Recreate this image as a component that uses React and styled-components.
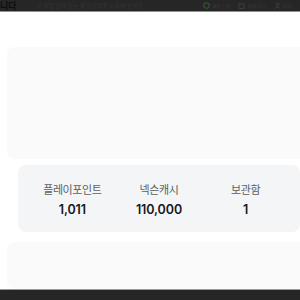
import React from "react";
import styled, { createGlobalStyle } from "styled-components";

const Global = createGlobalStyle`
  html, body { margin: 0; padding: 0; background: #ffffff; overflow: hidden; }
  body { font-family: "Noto Sans CJK KR", "Noto Sans", sans-serif; }
`;

const Page = styled.div`
  width: 300px;
  height: 300px;
  overflow: hidden;
  display: flex;
  flex-direction: column;
`;

const Header = styled.header`
  height: 11px;
  flex: none;
  background: #262626;
  border-bottom: 1px solid #8f8f8f;
  display: flex;
  align-items: center;
  overflow: hidden;
  white-space: nowrap;
`;

const Logo = styled.span`
  font-size: 9px;
  font-weight: 700;
  color: #0e0e0e;
  width: 37px;
  line-height: 11px;
`;

const Search = styled.span`
  font-size: 6px;
  color: #333333;
  flex: 1;
  line-height: 11px;
`;

const Util = styled.span`
  display: flex;
  align-items: center;
  gap: 2px;
  font-size: 5px;
  color: #3a3a3a;
  margin-right: ${(p) => p.$mr || 8}px;
`;

const Main = styled.main`
  flex: 1;
  display: flex;
  flex-direction: column;
  padding: 35px 0 0 7px;
`;

const Panel = styled.section`
  width: 320px;
  height: ${(p) => p.$h}px;
  margin-bottom: ${(p) => p.$mb || 0}px;
  background: #fafafa;
  border-radius: 8px 0 0 8px;
  flex: none;
`;

const Stats = styled.section`
  margin: 0 0 10px 11px;
  width: 282px;
  height: 67px;
  background: #f4f5f6;
  border-radius: 8px;
  display: grid;
  grid-template-columns: repeat(3, 1fr);
  padding: 0 11px;
  box-sizing: border-box;
  flex: none;
`;

const Stat = styled.div`
  display: flex;
  flex-direction: column;
  align-items: center;
  padding-top: 17px;
  gap: 6px;
`;

const Label = styled.span`
  font-size: 11px;
  line-height: 14px;
  color: #5a5e63;
  letter-spacing: -0.4px;
`;

const Value = styled.span`
  font-size: 12.5px;
  line-height: 16px;
  font-weight: 600;
  color: #16181b;
  font-family: "Inter", "Noto Sans", sans-serif;
  letter-spacing: -0.1px;
`;

const Footer = styled.footer`
  flex: none;
  height: 10px;
  background: #262626;
  border-top: 1px solid #9a9a9a;
`;

const stats = [
  { label: "플레이포인트", value: "1,011" },
  { label: "넥슨캐시", value: "110,000" },
  { label: "보관함", value: "1" },
];

export default function App() {
  return (
    <Page>
      <Global />
      <Header>
        <Logo>니다</Logo>
        <Search>Q 게임 검색 또는 통합검색을 이용해 보세요</Search>
        <Util>
          <svg width="7" height="7" viewBox="0 0 7 7">
            <circle cx="3.5" cy="3.5" r="2.8" fill="none" stroke="#2f6b2f" strokeWidth="1" />
          </svg>
          새로고침
        </Util>
        <Util>
          <svg width="7" height="7" viewBox="0 0 7 7">
            <rect x="1" y="2" width="5" height="4.5" fill="none" stroke="#444" strokeWidth="0.8" />
          </svg>
          장바구니
        </Util>
        <Util $mr={0}>
          <svg width="7" height="7" viewBox="0 0 7 7">
            <circle cx="3.5" cy="2.3" r="1.5" fill="none" stroke="#444" strokeWidth="0.8" />
            <path d="M0.8 6.8 Q3.5 3.6 6.2 6.8" fill="none" stroke="#444" strokeWidth="0.8" />
          </svg>
          마이
        </Util>
      </Header>
      <Main>
        <Panel $h={112} $mb={6} />
        <Stats>
          {stats.map((s) => (
            <Stat key={s.label}>
              <Label>{s.label}</Label>
              <Value>{s.value}</Value>
            </Stat>
          ))}
        </Stats>
        <Panel $h={47} />
      </Main>
      <Footer />
    </Page>
  );
}
